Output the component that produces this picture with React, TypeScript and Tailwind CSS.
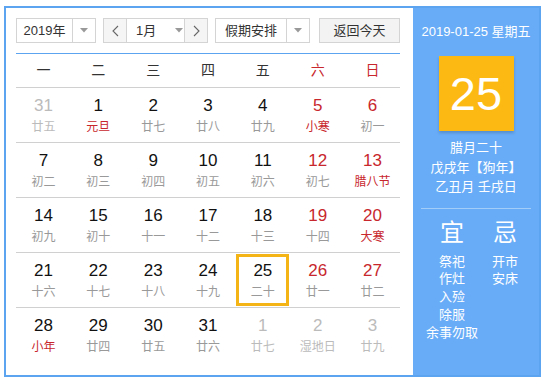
import React from "react";

type Day = {
  n: number;
  l: string;
  other?: boolean;
  redNum?: boolean;
  redLunar?: boolean;
  today?: boolean;
};

const weeks: Day[][] = [
  [
    { n: 31, l: "廿五", other: true },
    { n: 1, l: "元旦", redLunar: true },
    { n: 2, l: "廿七" },
    { n: 3, l: "廿八" },
    { n: 4, l: "廿九" },
    { n: 5, l: "小寒", redNum: true, redLunar: true },
    { n: 6, l: "初一", redNum: true },
  ],
  [
    { n: 7, l: "初二" },
    { n: 8, l: "初三" },
    { n: 9, l: "初四" },
    { n: 10, l: "初五" },
    { n: 11, l: "初六" },
    { n: 12, l: "初七", redNum: true },
    { n: 13, l: "腊八节", redNum: true, redLunar: true },
  ],
  [
    { n: 14, l: "初九" },
    { n: 15, l: "初十" },
    { n: 16, l: "十一" },
    { n: 17, l: "十二" },
    { n: 18, l: "十三" },
    { n: 19, l: "十四", redNum: true },
    { n: 20, l: "大寒", redNum: true, redLunar: true },
  ],
  [
    { n: 21, l: "十六" },
    { n: 22, l: "十七" },
    { n: 23, l: "十八" },
    { n: 24, l: "十九" },
    { n: 25, l: "二十", today: true },
    { n: 26, l: "廿一", redNum: true },
    { n: 27, l: "廿二", redNum: true },
  ],
  [
    { n: 28, l: "小年", redLunar: true },
    { n: 29, l: "廿四" },
    { n: 30, l: "廿五" },
    { n: 31, l: "廿六" },
    { n: 1, l: "廿七", other: true },
    { n: 2, l: "湿地日", other: true },
    { n: 3, l: "廿九", other: true },
  ],
];

const weekdays = ["一", "二", "三", "四", "五", "六", "日"];

const Caret = () => (
  <svg width="8" height="5" viewBox="0 0 8 5">
    <path d="M0 0 L8 0 L4 4.5 Z" fill="#999" />
  </svg>
);

const Chevron = ({ dir }: { dir: "l" | "r" }) => (
  <svg width="7" height="12" viewBox="0 0 7 12">
    <path
      d={dir === "l" ? "M6 1 L1 6 L6 11" : "M1 1 L6 6 L1 11"}
      fill="none"
      stroke="#666"
      strokeWidth="1.1"
    />
  </svg>
);

const App = () => {
  return (
    <div className="w-[547px] h-[381px] bg-white pl-[4px] pt-[6px] font-['Liberation_Sans','Noto_Sans_CJK_SC',sans-serif]">
      <div className="flex w-[537px] h-[371px] border-2 border-[#5da4f0]">
        {/* Calendar */}
        <div className="w-[407px] pl-[10px] pt-[10px] pr-[13px]">
          <div className="flex h-[25px] text-[13px] text-[#333]">
            <div className="flex w-[80px] border border-[#d4d4d4] bg-white">
              <div className="w-[55px] flex items-center justify-center">2019年</div>
              <div className="flex-1 border-l border-[#d4d4d4] flex items-center justify-center">
                <Caret />
              </div>
            </div>
            <div className="ml-[7px] flex w-[105px] border border-[#d4d4d4]">
              <div className="w-[23px] bg-[#f5f5f5] border-r border-[#d4d4d4] flex items-center justify-center">
                <Chevron dir="l" />
              </div>
              <div className="flex-1 flex items-center pl-[9px] gap-[19px]">
                <span>1月</span>
                <Caret />
              </div>
              <div className="w-[23px] bg-[#f5f5f5] border-l border-[#d4d4d4] flex items-center justify-center">
                <Chevron dir="r" />
              </div>
            </div>
            <div className="ml-[7px] flex w-[95px] border border-[#d4d4d4]">
              <div className="w-[70px] flex items-center justify-center">假期安排</div>
              <div className="flex-1 border-l border-[#d4d4d4] flex items-center justify-center">
                <Caret />
              </div>
            </div>
            <div className="ml-[9px] w-[81px] border border-[#d4d4d4] bg-[#f3f3f3] flex items-center justify-center">
              返回今天
            </div>
          </div>

          <div className="mt-[10px] border-t border-[#5da4f0]">
            <div className="grid grid-cols-7 h-[34px] items-center border-b border-[#d0d0d0] text-[14px]">
              {weekdays.map((w, i) => (
                <div
                  key={w}
                  className={`text-center ${i >= 5 ? "text-[#c8272d]" : "text-[#333]"}`}
                >
                  {w}
                </div>
              ))}
            </div>
            {weeks.map((week, wi) => (
              <div
                key={wi}
                className={`grid grid-cols-7 h-[55px] ${wi < 4 ? "border-b border-[#d0d0d0]" : ""}`}
              >
                {week.map((d, di) => (
                  <div key={di} className="relative flex flex-col items-center pt-[8px]">
                    <div
                      className={`text-[17px] leading-[20px] ${
                        d.other ? "text-[#bbb]" : d.redNum ? "text-[#c8272d]" : "text-[#111]"
                      }`}
                    >
                      {d.n}
                    </div>
                    <div
                      className={`mt-[3px] text-[12px] leading-[16px] ${
                        d.other ? "text-[#bbb]" : d.redLunar ? "text-[#c8272d]" : "text-[#999]"
                      }`}
                    >
                      {d.l}
                    </div>
                    {d.today && (
                      <div className="absolute left-[1px] right-[1px] top-[1px] bottom-[1px] border-[3px] border-[#f5b415]" />
                    )}
                  </div>
                ))}
              </div>
            ))}
          </div>
        </div>

        {/* Side panel */}
        <div className="flex-1 bg-[#68acf7] text-white flex flex-col items-center">
          <div className="mt-[16px] text-[13px] leading-[16px]">2019-01-25 星期五</div>
          <div className="mt-[16px] w-[75px] h-[75px] bg-[#fdb913] shadow-[0_2px_3px_rgba(0,0,0,0.18)] flex items-center justify-center text-[47px] leading-none font-['Liberation_Sans',sans-serif]">
            25
          </div>
          <div className="mt-[7px] text-[13px] leading-[19.5px] text-center">
            <div>腊月二十</div>
            <div>戊戌年【狗年】</div>
            <div>乙丑月 壬戌日</div>
          </div>
          <div className="mt-[11px] w-[110px] border-t border-[#a3cdf9]" />
          <div className="self-stretch pl-[13px] flex gap-[1px] mt-[10px]">
            <div className="w-[52px] flex flex-col items-center">
              <div className="text-[24px] leading-[28px]">宜</div>
              <div className="mt-[6px] text-[13px] leading-[17.8px] text-center whitespace-nowrap">
                <div>祭祀</div>
                <div>作灶</div>
                <div>入殓</div>
                <div>除服</div>
                <div>余事勿取</div>
              </div>
            </div>
            <div className="w-[52px] flex flex-col items-center">
              <div className="text-[24px] leading-[28px]">忌</div>
              <div className="mt-[6px] text-[13px] leading-[17.8px] text-center">
                <div>开市</div>
                <div>安床</div>
              </div>
            </div>
          </div>
        </div>
      </div>
    </div>
  );
};

export default App;
